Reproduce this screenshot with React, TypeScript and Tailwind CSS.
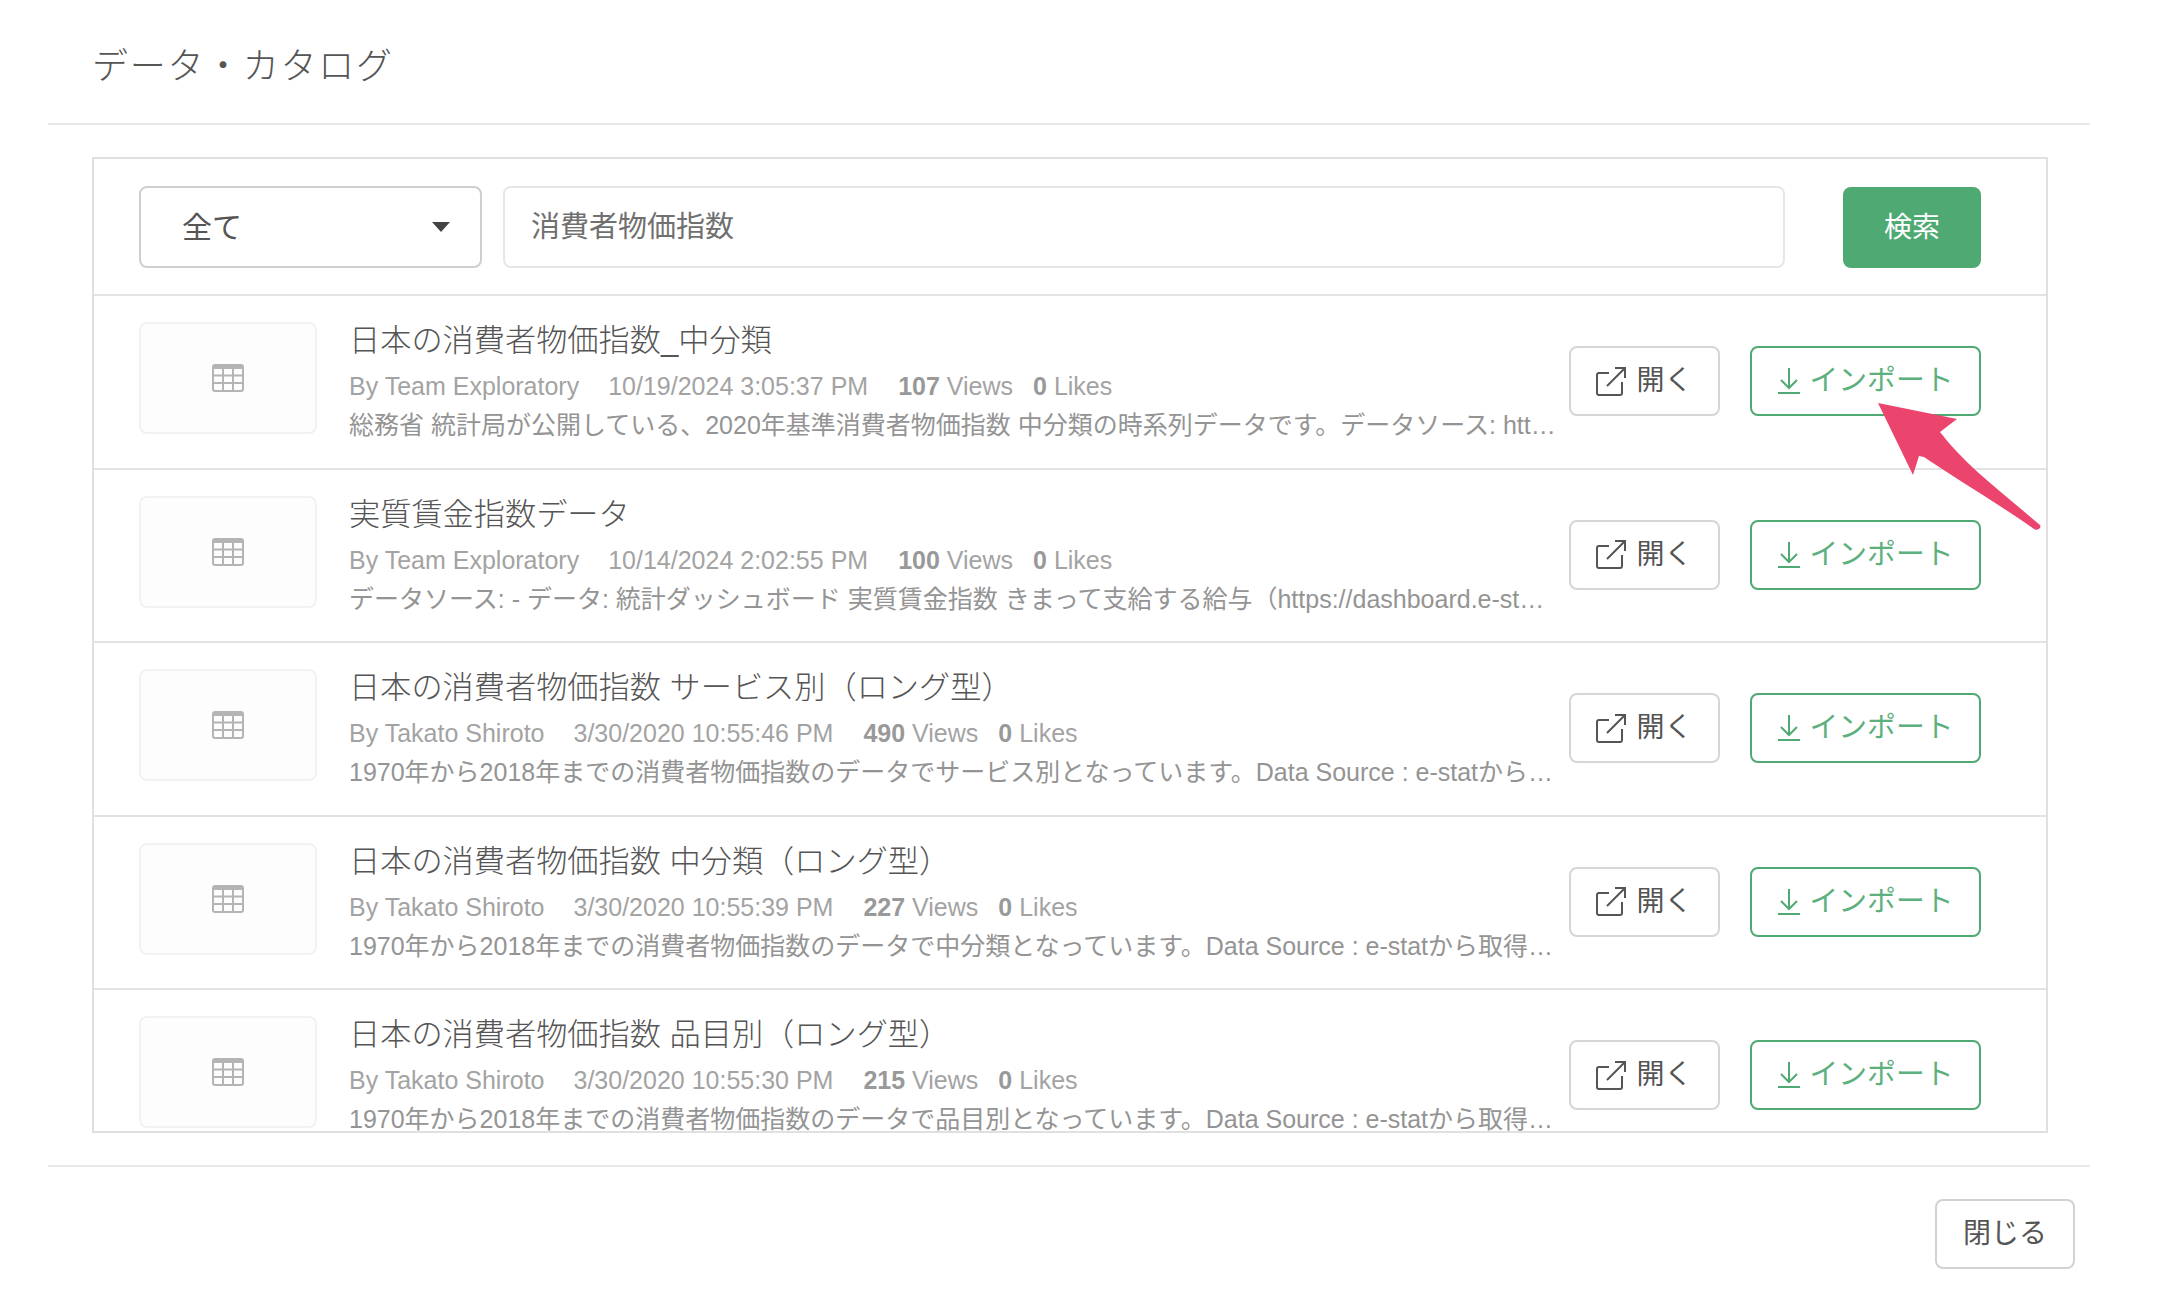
const FONT = "font-['Liberation_Sans','Noto_Sans_CJK_JP',sans-serif]";

const rows = [
  {
    title: "日本の消費者物価指数_中分類",
    by: "By Team Exploratory",
    date: "10/19/2024 3:05:37 PM",
    views: 107,
    desc: "総務省 統計局が公開している、2020年基準消費者物価指数 中分類の時系列データです。データソース: htt…",
  },
  {
    title: "実質賃金指数データ",
    by: "By Team Exploratory",
    date: "10/14/2024 2:02:55 PM",
    views: 100,
    desc: "データソース: - データ: 統計ダッシュボード 実質賃金指数 きまって支給する給与（https://dashboard.e-st…",
  },
  {
    title: "日本の消費者物価指数 サービス別（ロング型）",
    by: "By Takato Shiroto",
    date: "3/30/2020 10:55:46 PM",
    views: 490,
    desc: "1970年から2018年までの消費者物価指数のデータでサービス別となっています。Data Source : e-statから…",
  },
  {
    title: "日本の消費者物価指数 中分類（ロング型）",
    by: "By Takato Shiroto",
    date: "3/30/2020 10:55:39 PM",
    views: 227,
    desc: "1970年から2018年までの消費者物価指数のデータで中分類となっています。Data Source : e-statから取得…",
  },
  {
    title: "日本の消費者物価指数 品目別（ロング型）",
    by: "By Takato Shiroto",
    date: "3/30/2020 10:55:30 PM",
    views: 215,
    desc: "1970年から2018年までの消費者物価指数のデータで品目別となっています。Data Source : e-statから取得…",
  },
];

function TableIcon() {
  return (
    <svg width="32" height="28" viewBox="0 0 32 28" fill="none" stroke="#b4b4b4" strokeWidth="2">
      <rect x="1" y="1" width="30" height="26" rx="2" />
      <path d="M1 3h30" strokeWidth="4" />
      <path d="M1 11.5h30M1 19h30M11 4v23M21 4v23" />
    </svg>
  );
}

function OpenIcon() {
  return (
    <svg width="30" height="29" viewBox="0 0 30 29" fill="none" stroke="#555" strokeWidth="2">
      <path d="M13 6H3a2 2 0 0 0-2 2v18a2 2 0 0 0 2 2h21a2 2 0 0 0 2-2V15" />
      <path d="M11 19 29 1M19 1h10v10" />
    </svg>
  );
}

function ImportIcon() {
  return (
    <svg width="22" height="26" viewBox="0 0 22 26" fill="none" stroke="#4fa973" strokeWidth="2">
      <path d="M11 0v20M3 12l8 8 8-8M0 25h22" />
    </svg>
  );
}

function Row({ item }: { item: (typeof rows)[number] }) {
  return (
    <div className="flex h-[173.5px] shrink-0 border-t-2 border-[#e3e3e3] pl-[45px] pt-[26px]">
      <div className="flex h-[112px] w-[178px] shrink-0 items-center justify-center rounded-lg border-2 border-[#f2f2f2] bg-[#fdfdfd]">
        <TableIcon />
      </div>
      <div className="ml-[32px] w-[1212px] shrink-0 overflow-hidden pt-[1px]">
        <div className="text-[31.2px] leading-[36px] text-[#555] font-light whitespace-nowrap">{item.title}</div>
        <div className="mt-[8px] flex text-[25px] leading-[38px] text-[#a3a3a3] whitespace-nowrap">
          <span>{item.by}</span>
          <span className="ml-[29px]">{item.date}</span>
          <span className="ml-[30px]">
            <span className="font-bold text-[#999]">{item.views}</span> Views
          </span>
          <span className="ml-[20px]">
            <span className="font-bold text-[#999]">0</span> Likes
          </span>
        </div>
        <div className="text-[25px] leading-[40px] text-[#949494] whitespace-nowrap">{item.desc}</div>
      </div>
      <div className="ml-[8px] mt-[24px] flex h-[70px] w-[151px] shrink-0 items-center justify-center gap-[10px] rounded-lg border-2 border-[#d6d6d6] text-[28px] text-[#555]">
        <OpenIcon />
        <span>開く</span>
      </div>
      <div className="ml-[30px] mt-[24px] flex h-[70px] w-[231px] shrink-0 items-center justify-center gap-[10px] rounded-lg border-2 border-[#4fa973] text-[28.8px] text-[#5cb07e]">
        <ImportIcon />
        <span>インポート</span>
      </div>
    </div>
  );
}

export default function App() {
  return (
    <div className={`${FONT} relative h-[1310px] w-[2164px] overflow-hidden bg-white`}>
      {/* Header */}
      <div className="ml-[48px] mr-[74px] flex h-[125px] items-center border-b-2 border-[#e8e8e8] pl-[44px] pt-[10px]">
        <h1 className="text-[36px] font-light tracking-[1.7px] text-[#555]">データ・カタログ</h1>
      </div>

      {/* Catalog */}
      <div className="ml-[92px] mr-[116px] mt-[32px] flex h-[976px] flex-col overflow-hidden border-2 border-[#e0e0e0]">
        <div className="flex h-[135px] shrink-0 pl-[45px] pt-[27px]">
          <div className="flex h-[82px] w-[343px] items-center justify-between rounded-lg border-2 border-[#cfcfcf] pl-[41px] pr-[30px] text-[30px] text-[#555]">
            <span>全て</span>
            <span className="h-0 w-0 border-x-[9px] border-t-[10px] border-x-transparent border-t-[#444]" />
          </div>
          <div className="ml-[21px] flex h-[82px] w-[1282px] items-center rounded-lg border-2 border-[#e6e6e6] pl-[26px] pt-[2px] text-[29px] text-[#707070]">
            消費者物価指数
          </div>
          <div className="ml-[58px] mt-[1px] flex h-[81px] w-[138px] items-center justify-center rounded-lg bg-[#4fa973] text-[28px] text-white">
            検索
          </div>
        </div>
        {rows.map((item) => (
          <Row key={item.title} item={item} />
        ))}
      </div>

      {/* Footer */}
      <div className="ml-[48px] mr-[74px] mt-[32px] h-[103px] border-t-2 border-[#e8e8e8] pt-[32px]">
        <div className="ml-auto mr-[15px] flex h-[70px] w-[140px] items-center justify-center rounded-lg border-2 border-[#d2d2d2] text-[28px] text-[#555]">
          閉じる
        </div>
      </div>

      {/* Annotation arrow */}
      <svg className="absolute left-[1870px] top-[395px]" width="180" height="145" viewBox="1870 395 180 145">
        <path
          d="M1878 403 1957 419 1940 432C1965 465 2005 495 2040 525 2042 528 2037 531 2034 529 2000 505 1955 478 1924 457L1919 456 1913 475Z"
          fill="#eb446d"
        />
      </svg>
    </div>
  );
}
